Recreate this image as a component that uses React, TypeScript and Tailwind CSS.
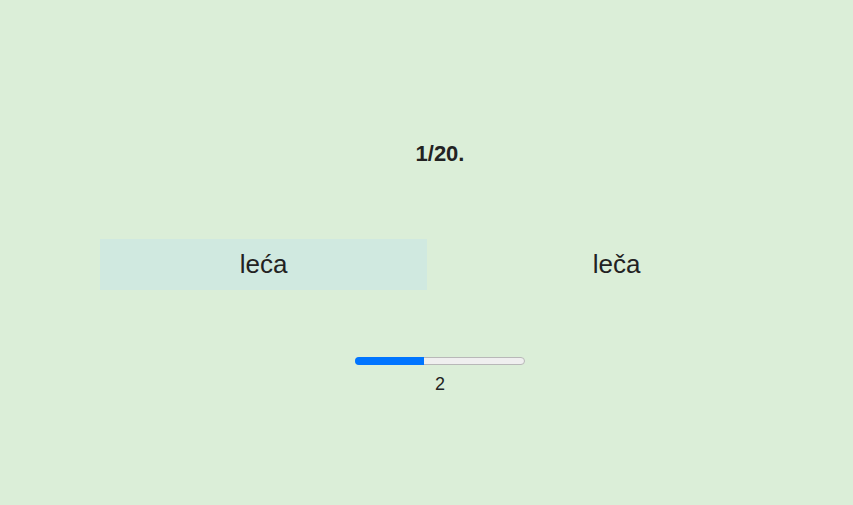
export default function App() {
  return (
    <div className="min-h-screen w-full bg-[#dbeed8] font-['Liberation_Sans',Arial,sans-serif] text-[#222]">
      <div className="ml-[100px] w-[680px] pt-[140px]">
        <div className="text-center text-[22px] font-bold leading-[28px]">1/20.</div>

        <div className="mt-[71px] grid grid-cols-2 gap-[26px]">
          <div className="flex h-[51px] items-center justify-center bg-[#d0e9e0] text-[26px]">leća</div>
          <div className="flex h-[51px] items-center justify-center text-[26px]">leča</div>
        </div>

        <div className="mt-[67px] flex flex-col items-center">
          <div className="relative h-[8px] w-[170px] rounded-full border border-[#b8b8b8] bg-[#efefef]">
            <div className="absolute -left-px -top-px h-[8px] w-[69px] rounded-l-full bg-[#0075ff]" />
          </div>
          <div className="mt-[8px] text-[18px] leading-[22px]">2</div>
        </div>
      </div>
    </div>
  );
}
